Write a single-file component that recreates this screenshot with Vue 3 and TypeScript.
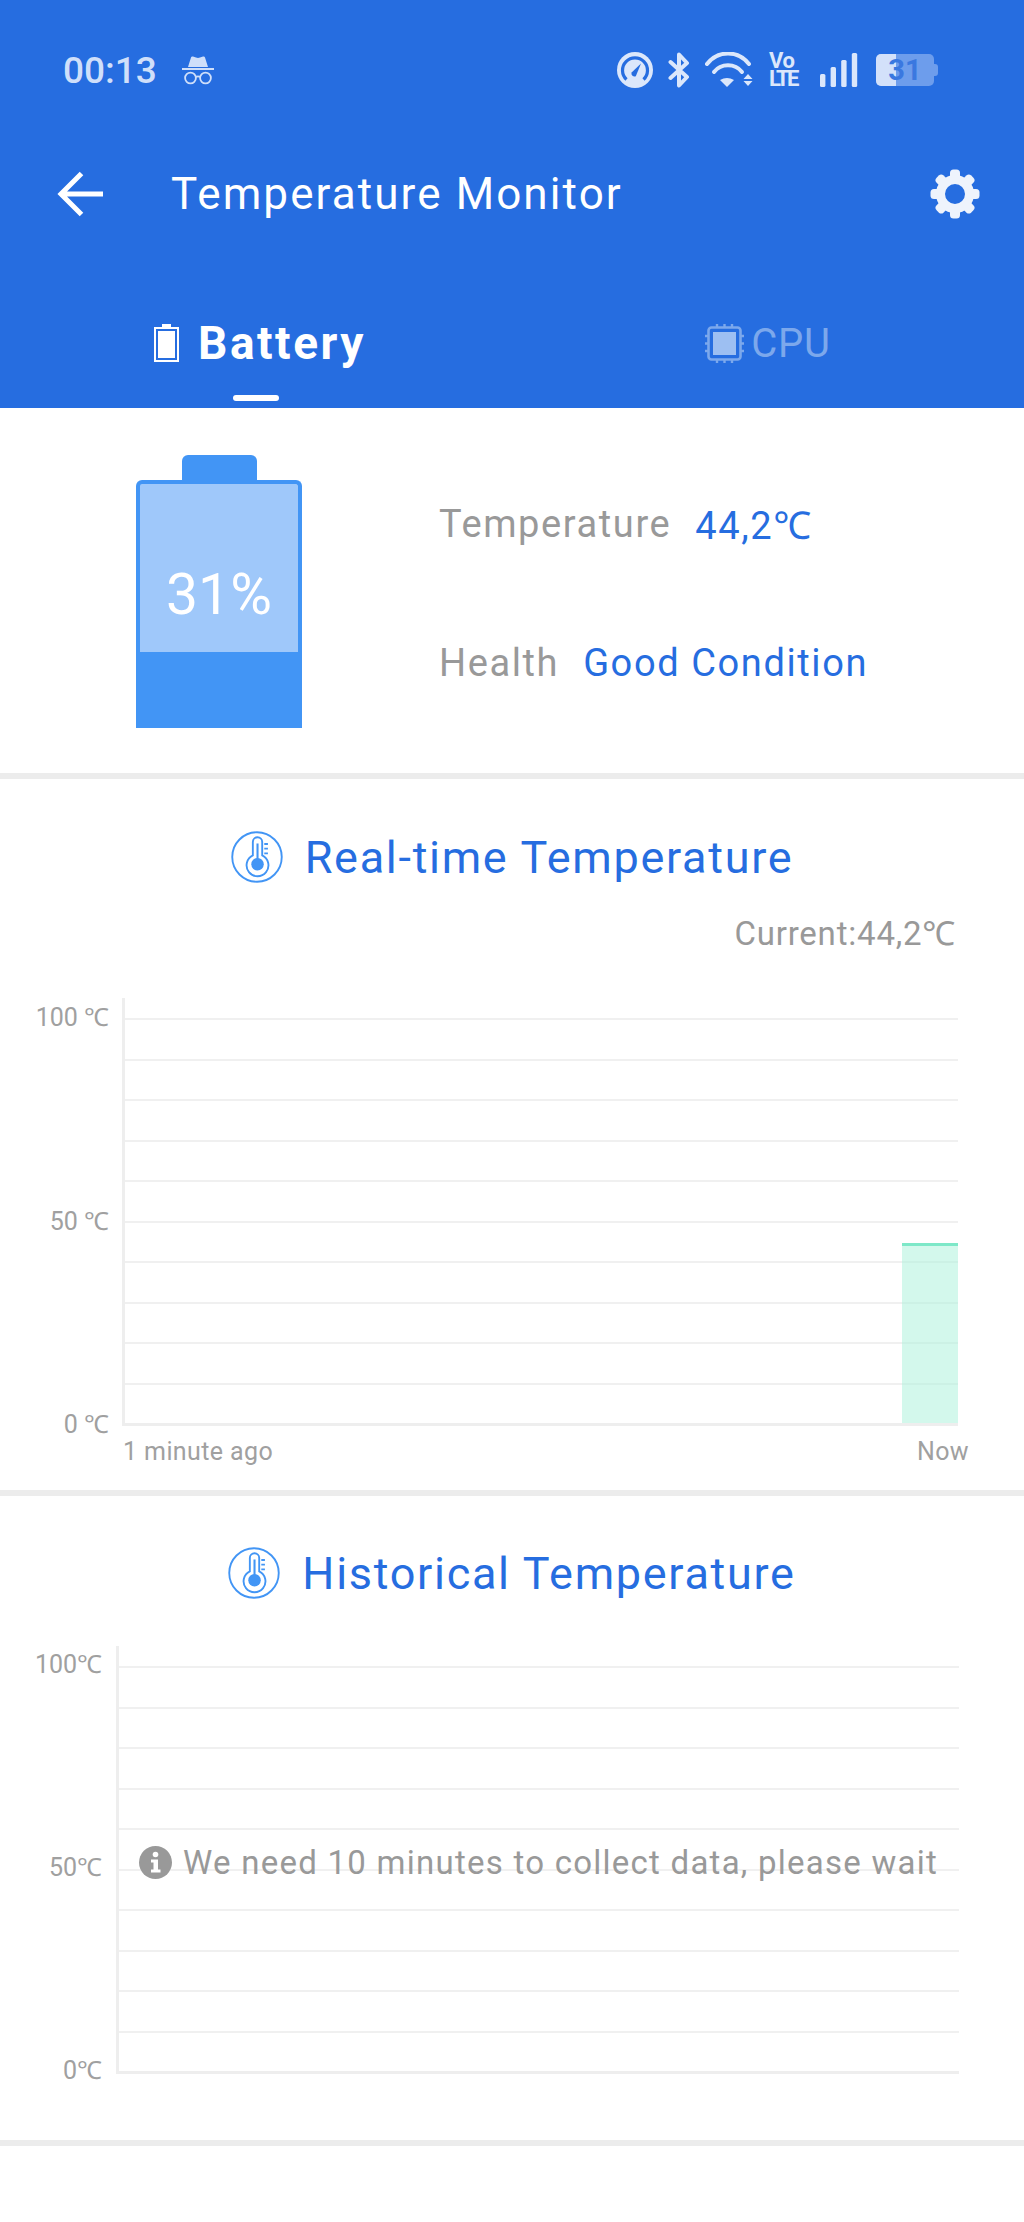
<script setup lang="ts">
const gridRows = Array.from({ length: 10 }, (_, i) => i);
const realtimeLabels = ["100 ℃", "50 ℃", "0 ℃"];
const historyLabels = ["100℃", "50℃", "0℃"];
const gearTeeth = Array.from({ length: 8 }, (_, i) => i * 45);
</script>

<template>
  <div class="page">
    <header class="header">
      <div class="status-bar">
        <span class="clock">00:13</span>
        <svg class="incognito" viewBox="0 0 32 30" fill="none">
          <path d="M6 11 L9 1.5 Q9.5 0 11 .6 L14 1.6 Q16 2.2 18 1.6 L21 .6 Q22.5 0 23 1.5 L26 11 Z" fill="#cfdffa" />
          <path d="M0 13 H32" stroke="#cfdffa" stroke-width="2" />
          <circle cx="8.5" cy="22" r="5.4" stroke="#cfdffa" stroke-width="1.8" />
          <circle cx="23.5" cy="22" r="5.4" stroke="#cfdffa" stroke-width="1.8" />
          <path d="M14 21 Q16 19.6 18 21" stroke="#cfdffa" stroke-width="1.8" />
        </svg>
        <div class="status-icons">
          <svg class="st-gauge" viewBox="0 0 36 36" fill="none">
            <circle cx="18" cy="18" r="18" fill="#dbe7fb" />
            <path d="M9.5 27.5A12.5 12.5 0 1 1 26.5 27.5" stroke="#266de0" stroke-width="3.2" />
            <path d="M24 11.5L14.6 20.5A3 3 0 0 0 18.8 24.2Z" fill="#266de0" />
          </svg>
          <svg class="st-bt" viewBox="0 0 22 36" fill="none">
            <path d="M2.5 10L19 25L11 33.5V2.5L19 11L2.5 26" stroke="#dbe7fb" stroke-width="4" stroke-linejoin="round" stroke-linecap="round" />
          </svg>
          <svg class="st-wifi" viewBox="0 0 48 36" fill="none">
            <path d="M2 12C13 -2 33 -2 44 12" stroke="#dbe7fb" stroke-width="4" stroke-linecap="round" />
            <path d="M9 20C16 11 30 11 37 20" stroke="#dbe7fb" stroke-width="4" stroke-linecap="round" />
            <path d="M15 28Q22 24 29 28L22 35Z" fill="#dbe7fb" />
            <path d="M43 22L47.5 27H38.5Z M38.5 29H47.5L43 34Z" fill="#dbe7fb" />
          </svg>
          <div class="st-volte">
            <span>Vo</span>
            <span class="st-lte">LTE</span>
          </div>
          <svg class="st-signal" viewBox="0 0 38 34">
            <rect x="0" y="21" width="5.4" height="13" rx="1.5" fill="#dbe7fb" />
            <rect x="10.6" y="14" width="5.4" height="20" rx="1.5" fill="#dbe7fb" />
            <rect x="21.2" y="7" width="5.4" height="27" rx="1.5" fill="#dbe7fb" />
            <rect x="31.8" y="0" width="5.4" height="34" rx="1.5" fill="#dbe7fb" />
          </svg>
          <div class="st-battery">
            <div class="st-battery-fill"></div>
            <span class="st-battery-num">31</span>
            <div class="st-battery-tip"></div>
          </div>
        </div>
      </div>

      <div class="toolbar">
        <svg class="back" viewBox="0 0 46 46" fill="none">
          <path d="M46 23H4M24.5 2.5L4 23L24.5 43.5" stroke="#fff" stroke-width="5" />
        </svg>
        <h1 class="toolbar-title">Temperature Monitor</h1>
        <svg class="gear" viewBox="0 0 50 50" fill="none">
          <circle cx="25" cy="25" r="14.5" stroke="#eef3fc" stroke-width="9" />
          <rect
            v-for="angle in gearTeeth"
            :key="angle"
            x="20"
            y="0.5"
            width="10"
            height="12"
            rx="3.5"
            fill="#eef3fc"
            :transform="`rotate(${angle} 25 25)`"
          />
        </svg>
      </div>

      <div class="tabs">
        <div class="tab tab-active">
          <div class="tab-label">
            <svg class="tab-battery" viewBox="0 0 25 38" fill="none">
              <rect x="8" y="0" width="9" height="4" fill="#fff" />
              <rect x="1" y="4" width="23" height="33" stroke="#fff" stroke-width="2" />
              <rect x="4" y="7" width="17" height="27" fill="#fff" />
            </svg>
            <span>Battery</span>
          </div>
          <div class="tab-line"></div>
        </div>
        <div class="tab tab-idle">
          <div class="tab-label">
            <svg class="tab-cpu" viewBox="0 0 39 39" fill="none">
              <rect x="3.5" y="3.5" width="32" height="32" rx="3" stroke="#7ca8ec" stroke-width="2.6" />
              <rect x="8" y="8" width="23" height="23" fill="#9dbff2" />
              <path d="M12 0v3M19.5 0v3M27 0v3M12 36v3M19.5 36v3M27 36v3M0 12h3M0 19.5h3M0 27h3M36 12h3M36 19.5h3M36 27h3" stroke="#7ca8ec" stroke-width="2.4" />
            </svg>
            <span>CPU</span>
          </div>
        </div>
      </div>
    </header>

    <section class="summary">
      <div class="battery">
        <div class="battery-cap"></div>
        <div class="battery-body">
          <div class="battery-empty">31%</div>
          <div class="battery-level"></div>
        </div>
      </div>
      <div class="info">
        <div class="info-row">
          <span class="info-key">Temperature</span>
          <span class="info-value">44,2℃</span>
        </div>
        <div class="info-row">
          <span class="info-key">Health</span>
          <span class="info-value">Good Condition</span>
        </div>
      </div>
    </section>

    <section class="card card-realtime">
      <div class="card-title">
        <svg class="thermo" viewBox="0 0 50 50" fill="none">
          <circle cx="25" cy="25" r="23.8" stroke="#4295f5" stroke-width="1.8" />
          <path d="M21 10.5a4.5 4.5 0 0 1 9 0V23.5a10.5 10.5 0 1 1-9 0Z" stroke="#4295f5" stroke-width="1.8" />
          <path d="M25.5 12V27" stroke="#4295f5" stroke-width="2" />
          <circle cx="25.5" cy="32" r="6" fill="#4295f5" />
          <path d="M32 12.5h3.5M32 17h3.5M32 21.5h3.5" stroke="#4295f5" stroke-width="1.8" />
        </svg>
        <h2>Real-time Temperature</h2>
      </div>
      <div class="current">Current:44,2℃</div>
      <div class="chart chart-realtime">
        <div class="y-labels">
          <span v-for="label in realtimeLabels" :key="label">{{ label }}</span>
        </div>
        <div class="plot">
          <div v-for="row in gridRows" :key="row" class="grid-row"></div>
          <div class="bar"></div>
        </div>
      </div>
      <div class="x-labels">
        <span>1 minute ago</span>
        <span>Now</span>
      </div>
    </section>

    <section class="card card-history">
      <div class="card-title">
        <svg class="thermo" viewBox="0 0 50 50" fill="none">
          <circle cx="25" cy="25" r="23.8" stroke="#4295f5" stroke-width="1.8" />
          <path d="M21 10.5a4.5 4.5 0 0 1 9 0V23.5a10.5 10.5 0 1 1-9 0Z" stroke="#4295f5" stroke-width="1.8" />
          <path d="M25.5 12V27" stroke="#4295f5" stroke-width="2" />
          <circle cx="25.5" cy="32" r="6" fill="#4295f5" />
          <path d="M32 12.5h3.5M32 17h3.5M32 21.5h3.5" stroke="#4295f5" stroke-width="1.8" />
        </svg>
        <h2>Historical Temperature</h2>
      </div>
      <div class="chart chart-history">
        <div class="y-labels">
          <span v-for="label in historyLabels" :key="label">{{ label }}</span>
        </div>
        <div class="plot">
          <div v-for="row in gridRows" :key="row" class="grid-row"></div>
          <div class="wait-note">
            <svg class="info-icon" viewBox="0 0 33 33">
              <circle cx="16.5" cy="16.5" r="16.5" fill="#999" />
              <circle cx="16.5" cy="8.5" r="2.8" fill="#fff" />
              <path d="M12 13.5H19V23.5H21.5V26.5H12V23.5H14.5V16.5H12Z" fill="#fff" />
            </svg>
            <span>We need 10 minutes to collect data, please wait</span>
          </div>
        </div>
      </div>
    </section>
  </div>
</template>

<style>
html,
body {
  margin: 0;
  background: #fff;
}
</style>

<style scoped>
.page {
  width: 1024px;
  height: 2222px;
  overflow: hidden;
  background: #fff;
  font-family: Roboto, "Noto Sans", sans-serif;
}

.header {
  height: 408px;
  background: #266de0;
  display: flex;
  flex-direction: column;
}

.status-bar {
  height: 140px;
  display: flex;
  align-items: center;
  padding: 0 85px 0 63px;
}

.clock {
  font-size: 37px;
  font-weight: 500;
  color: #cfdffa;
}

.incognito {
  width: 32px;
  height: 30px;
  margin: 2px 0 0 25px;
}

.status-icons {
  margin-left: auto;
  display: flex;
  align-items: center;
}

.st-gauge {
  width: 36px;
  height: 36px;
}

.st-bt {
  width: 22px;
  height: 36px;
  margin-left: 15px;
}

.st-wifi {
  width: 48px;
  height: 36px;
  margin-left: 15px;
}

.st-volte {
  margin-left: 16px;
  width: 32px;
  display: flex;
  flex-direction: column;
  align-items: flex-start;
  font-size: 22px;
  line-height: 18px;
  font-weight: 700;
  color: #dbe7fb;
  letter-spacing: -0.5px;
}

.st-lte {
  letter-spacing: -2.5px;
}

.st-signal {
  width: 38px;
  height: 34px;
  margin-left: 19px;
}

.st-battery {
  position: relative;
  width: 58px;
  height: 32px;
  margin-left: 18px;
  margin-right: 5px;
  border-radius: 5px;
  background: #6d9dec;
  display: flex;
  align-items: center;
  justify-content: center;
}

.st-battery-fill {
  position: absolute;
  left: 0;
  top: 0;
  bottom: 0;
  width: 20px;
  background: #d3e1fa;
  border-radius: 5px 0 0 5px;
}

.st-battery-num {
  position: relative;
  font-size: 29px;
  font-weight: 700;
  color: #3a78e0;
}

.st-battery-tip {
  position: absolute;
  right: -4px;
  top: 10px;
  width: 4px;
  height: 12px;
  background: #6d9dec;
  border-radius: 0 3px 3px 0;
}

.toolbar {
  height: 108px;
  display: flex;
  align-items: center;
  padding: 0 44px 0 57px;
}

.back {
  width: 46px;
  height: 46px;
  flex: none;
}

.toolbar-title {
  margin: 0 0 0 68px;
  font-size: 44px;
  font-weight: 400;
  letter-spacing: 2.1px;
  color: #fff;
}

.gear {
  width: 50px;
  height: 50px;
  margin-left: auto;
}

.tabs {
  flex: 1;
  display: flex;
}

.tab {
  flex: 1;
  display: flex;
  flex-direction: column;
  align-items: center;
  padding-top: 70px;
}

.tab-label {
  height: 50px;
  display: flex;
  align-items: center;
}

.tab-active {
  color: #fff;
  font-size: 46px;
  font-weight: 700;
  letter-spacing: 2.5px;
}

.tab-active .tab-label {
  padding-left: 8px;
}

.tab-idle {
  color: #7ca8ec;
  font-size: 40px;
  letter-spacing: 0.7px;
}

.tab-battery {
  width: 25px;
  height: 38px;
  margin-right: 19px;
}

.tab-cpu {
  width: 39px;
  height: 39px;
  margin-right: 7px;
}

.tab-line {
  width: 46px;
  height: 6px;
  margin-top: 27px;
  border-radius: 3px;
  background: #fff;
}

.summary {
  box-sizing: border-box;
  border-bottom: 6px solid #ececec;
  height: 371px;
  display: flex;
  padding: 47px 0 0 136px;
}

.battery {
  width: 166px;
  display: flex;
  flex-direction: column;
  align-items: center;
}

.battery-cap {
  width: 75px;
  height: 25px;
  border-radius: 6px 6px 0 0;
  background: #4295f5;
}

.battery-body {
  width: 100%;
  height: 248px;
  box-sizing: border-box;
  border: 4px solid #4295f5;
  border-bottom: 0;
  border-radius: 6px 6px 0 0;
  background: #9fc8fa;
  display: flex;
  flex-direction: column;
}

.battery-empty {
  flex: 1;
  padding-top: 78px;
  box-sizing: border-box;
  text-align: center;
  font-size: 57px;
  line-height: 66px;
  color: #fff;
}

.battery-level {
  height: 76px;
  background: #4295f5;
}

.info {
  margin-left: 137px;
  padding-top: 44px;
  display: flex;
  flex-direction: column;
  gap: 89px;
}

.info-row {
  height: 50px;
  display: flex;
  align-items: center;
  gap: 24px;
  font-size: 38px;
  letter-spacing: 1.6px;
}

.info-key {
  color: #999;
}

.info-value {
  color: #266de0;
}

.card {
  box-sizing: border-box;
  border-bottom: 6px solid #ececec;
}

.card-realtime {
  height: 717px;
  padding-top: 48px;
}

.card-history {
  height: 650px;
  padding-top: 47px;
}

.card-title {
  height: 60px;
  display: flex;
  align-items: center;
  justify-content: center;
  gap: 22px;
}

.card-title h2 {
  margin: 0;
  font-size: 45px;
  font-weight: 400;
  letter-spacing: 1.7px;
  color: #266de0;
}

.thermo {
  width: 52px;
  height: 52px;
}

.current {
  height: 40px;
  margin-top: 27px;
  padding-right: 68px;
  text-align: right;
  font-size: 33px;
  line-height: 40px;
  letter-spacing: 0.8px;
  color: #999;
}

.chart {
  display: flex;
  align-items: flex-start;
}

.chart-realtime {
  margin-top: 44px;
  padding-right: 66px;
}

.chart-history {
  margin-top: 43px;
  padding-right: 65px;
}

.y-labels {
  flex: none;
  display: flex;
  flex-direction: column;
  justify-content: space-between;
  align-items: flex-end;
  font-size: 25px;
  line-height: 30px;
  color: #a0a0a0;
}

.chart-realtime .y-labels {
  width: 109px;
  height: 437px;
  margin-top: 5px;
  margin-right: 13px;
}

.chart-history .y-labels {
  width: 102px;
  height: 436px;
  margin-top: 4px;
  margin-right: 14px;
}

.plot {
  position: relative;
  flex: 1;
  box-sizing: border-box;
  height: 428px;
  padding-top: 20px;
  border-left: 3px solid #eeeeee;
  border-bottom: 3px solid #eeeeee;
}

.grid-row {
  height: 40.5px;
  box-sizing: border-box;
  border-top: 2px solid #f0f0f0;
}

.bar {
  position: absolute;
  right: 0;
  bottom: 0;
  width: 56px;
  height: 180px;
  box-sizing: border-box;
  border-top: 3px solid #7de8c8;
  background: rgba(170, 242, 219, 0.52);
}

.wait-note {
  position: absolute;
  left: 20px;
  top: 197px;
  display: flex;
  align-items: center;
  gap: 11px;
  font-size: 33px;
  letter-spacing: 1.25px;
  white-space: nowrap;
  color: #999;
}

.info-icon {
  width: 33px;
  height: 33px;
  flex: none;
}

.x-labels {
  margin: -3px 0 0 123px;
  padding-right: 55px;
  display: flex;
  justify-content: space-between;
  font-size: 25px;
  line-height: 30px;
  letter-spacing: 0.4px;
  color: #a0a0a0;
}
</style>
